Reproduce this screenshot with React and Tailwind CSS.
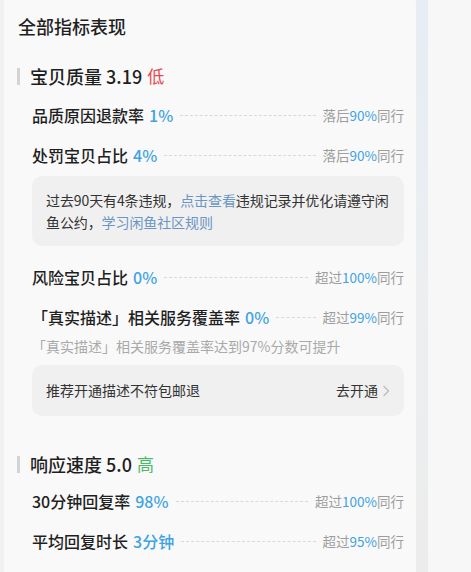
import React from "react";

const font = { fontFamily: '"Noto Sans CJK SC", "Noto Sans", sans-serif' };

function Row({ label, value, prefix, pct }) {
  return (
    <div className="flex h-10 items-center">
      <span className="text-[16px] font-medium text-[#1f1f1f] whitespace-nowrap">{label}</span>
      <span className="ml-[5px] text-[16px] font-medium text-[#3fa3e3] whitespace-nowrap">{value}</span>
      <div className="mx-[7px] flex-1 border-t border-dashed border-[#d9d9d9]" />
      <span className="text-[13.5px] text-[#9d9d9d] whitespace-nowrap">
        {prefix}
        <span className="text-[#3fa3e3]">{pct}</span>同行
      </span>
    </div>
  );
}

function Heading({ name, score, level, levelColor }) {
  return (
    <div className="flex h-[26px] items-center -ml-[15px]">
      <div className="h-[17px] w-[3px] bg-[#d4d4d4]" />
      <span className="ml-[10px] text-[18px] font-medium text-[#1f1f1f] whitespace-nowrap">
        {name} {score}
      </span>
      <span className={`ml-[5px] text-[17px] ${levelColor}`}>{level}</span>
    </div>
  );
}

export default function App() {
  return (
    <div className="flex h-[572px] w-[471px] overflow-hidden bg-[#f7f7f7]" style={font}>
      <div className="w-[4px] shrink-0 bg-[#f1f1f1]" />
      <div className="w-[412px] shrink-0 rounded-tr-[6px] bg-[#f9f9f9] pl-[28px] pr-[12px] pt-[13px]">
        <div className="-ml-[14px] h-[26px] text-[18px] font-medium leading-[26px] text-[#1f1f1f]">
          全部指标表现
        </div>

        <div className="mt-[24px]">
          <Heading name="宝贝质量" score="3.19" level="低" levelColor="text-[#e5484d]" />
          <div className="mt-[6px]">
            <Row label="品质原因退款率" value="1%" prefix="落后" pct="90%" />
            <Row label="处罚宝贝占比" value="4%" prefix="落后" pct="90%" />
          </div>
          <div className="mt-[1px] rounded-[10px] bg-[#f0f0f0] py-[13px] pl-[14px] pr-[6px] text-[14px] leading-[22px] tracking-[-0.1px] text-[#333333]">
            <p>
              过去90天有4条违规，<span className="text-[#6a95c4]">点击查看</span>违规记录并优化请遵守闲
            </p>
            <p>
              鱼公约，<span className="text-[#6a95c4]">学习闲鱼社区规则</span>
            </p>
          </div>
          <div className="mt-[11px]">
            <Row label="风险宝贝占比" value="0%" prefix="超过" pct="100%" />
            <Row label="「真实描述」相关服务覆盖率" value="0%" prefix="超过" pct="99%" />
          </div>
          <div className="h-[18px] text-[14px] leading-[18px] text-[#a9a9a9] whitespace-nowrap">
            「真实描述」相关服务覆盖率达到97%分数可提升
          </div>
          <div className="mt-[10px] flex h-[51px] items-center justify-between rounded-[10px] bg-[#f0f0f0] pl-[14px] pr-[13px] text-[14px] text-[#333333]">
            <span>推荐开通描述不符包邮退</span>
            <span className="flex items-center">
              去开通
              <svg width="10" height="12" viewBox="0 0 10 12" className="ml-[3px]">
                <polyline points="3,1.5 7.5,6 3,10.5" fill="none" stroke="#bdbdbd" strokeWidth="1.4" strokeLinecap="round" strokeLinejoin="round" />
              </svg>
            </span>
          </div>
        </div>

        <div className="mt-[35px]">
          <Heading name="响应速度" score="5.0" level="高" levelColor="text-[#4cb86a]" />
          <div className="mt-[4px]">
            <Row label="30分钟回复率" value="98%" prefix="超过" pct="100%" />
            <Row label="平均回复时长" value="3分钟" prefix="超过" pct="95%" />
          </div>
        </div>
      </div>
      <div className="w-[12px] shrink-0 bg-gradient-to-b from-[#e6edf4] via-[#eceef0] to-[#ececec]" />
      <div className="flex-1 bg-[#f7f7f7]" />
    </div>
  );
}
